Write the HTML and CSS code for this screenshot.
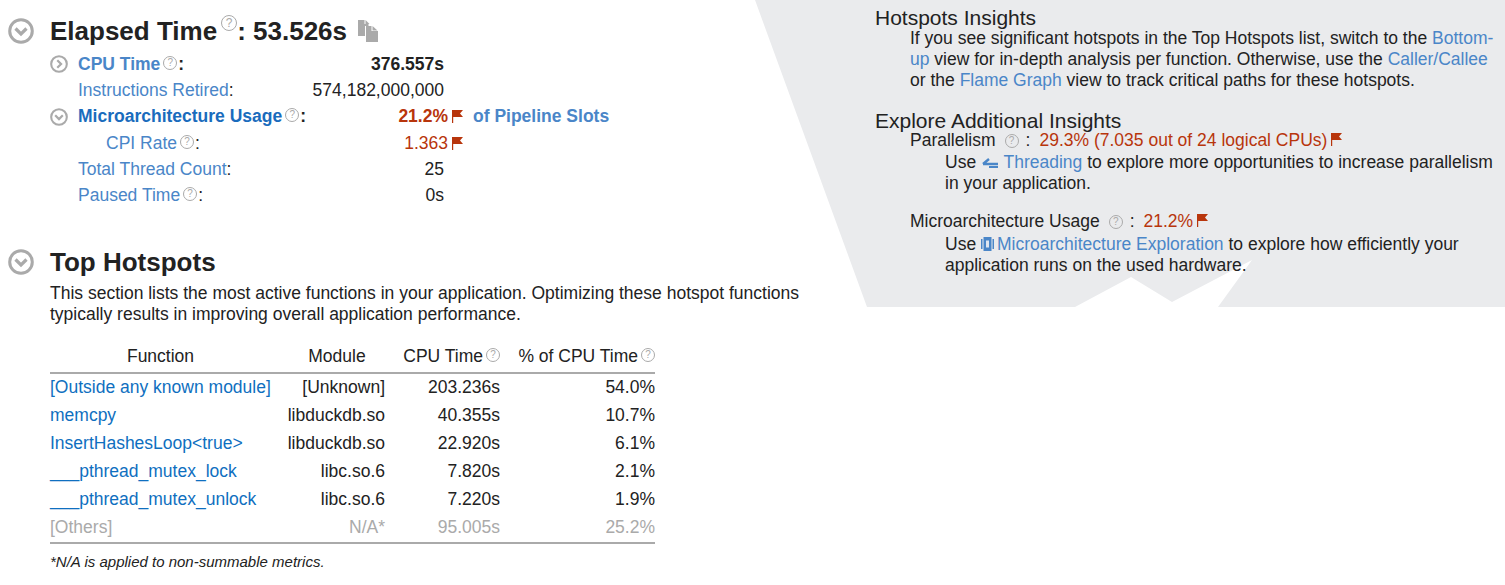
FILE: index.html
```html
<!DOCTYPE html>
<html lang="en">
<head>
  <meta charset="UTF-8" />
  <title>Summary</title>
  <link rel="stylesheet" href="styles.css">
</head>
<body>
  <svg class="defs" width="0" height="0">
    <symbol id="chev-down" viewBox="0 0 26 26"><circle cx="13" cy="13" r="11.300" fill="none" stroke="#aaa" stroke-width="3"/><path d="M7.500 10.500l5.500 5.500 5.500-5.500" fill="none" stroke="#aaa" stroke-width="3.200"/></symbol>
    <symbol id="chev-right" viewBox="0 0 26 26"><circle cx="13" cy="13" r="11.300" fill="none" stroke="#aaa" stroke-width="3"/><path d="M10.500 7.500l5.500 5.500-5.500 5.500" fill="none" stroke="#aaa" stroke-width="3.200"/></symbol>
    <symbol id="flag" viewBox="0 0 11 13"><path d="M0 0h1.200v13h-1.200zM1.200 0h9.800l-3 3.500 3 3.500h-9.800z" fill="#b8350c"/></symbol>
  </svg>

  <main class="left">
    <section class="elapsed">
      <div class="head">
        <svg class="toggle"><use href="#chev-down"/></svg>
        <h1>Elapsed Time<span class="help help-big">?</span>: 53.526s</h1>
        <svg class="copy" viewBox="0 0 20 22"><path d="M0 0h6.500v4h4v2h-3.500v10h-7z" fill="#aaa"/><path d="M7.500 0l4 4h-4z" fill="#aaa"/><path d="M8 6h5.500v5h6.500v11h-12z" fill="#aaa"/><path d="M14.500 6l5 4.500h-5z" fill="#aaa"/></svg>
      </div>
      <div class="metrics">
        <div class="metric strong">
          <svg class="toggle-sm"><use href="#chev-right"/></svg>
          <span class="label">CPU Time<span class="help">?</span><span class="dark">:</span></span>
          <span class="value">376.557s</span>
        </div>
        <div class="metric">
          <span class="label">Instructions Retired<span class="dark">:</span></span>
          <span class="value">574,182,000,000</span>
        </div>
        <div class="metric strong">
          <svg class="toggle-sm"><use href="#chev-down"/></svg>
          <span class="label deep">Microarchitecture Usage<span class="help">?</span><span class="dark">:</span></span>
          <span class="value bad">21.2%</span>
          <svg class="flag"><use href="#flag"/></svg>
          <span class="unit">of Pipeline Slots</span>
        </div>
        <div class="metric sub">
          <span class="label">CPI Rate<span class="help">?</span><span class="dark">:</span></span>
          <span class="value bad">1.363</span>
          <svg class="flag"><use href="#flag"/></svg>
        </div>
        <div class="metric">
          <span class="label">Total Thread Count<span class="dark">:</span></span>
          <span class="value">25</span>
        </div>
        <div class="metric">
          <span class="label">Paused Time<span class="help">?</span><span class="dark">:</span></span>
          <span class="value">0s</span>
        </div>
      </div>
    </section>

    <section class="hotspots">
      <div class="head">
        <svg class="toggle"><use href="#chev-down"/></svg>
        <h1>Top Hotspots</h1>
      </div>
      <p class="intro">This section lists the most active functions in your application. Optimizing these hotspot functions typically results in improving overall application performance.</p>
      <table class="grid">
        <thead>
          <tr>
            <th class="fn">Function</th>
            <th class="mod">Module</th>
            <th class="cpu">CPU Time<span class="help">?</span></th>
            <th class="pct">% of CPU Time<span class="help">?</span></th>
          </tr>
        </thead>
        <tbody>
          <tr><td><a>[Outside any known module]</a></td><td>[Unknown]</td><td>203.236s</td><td>54.0%</td></tr>
          <tr><td><a>memcpy</a></td><td>libduckdb.so</td><td>40.355s</td><td>10.7%</td></tr>
          <tr><td><a>InsertHashesLoop&lt;true&gt;</a></td><td>libduckdb.so</td><td>22.920s</td><td>6.1%</td></tr>
          <tr><td><a>___pthread_mutex_lock</a></td><td>libc.so.6</td><td>7.820s</td><td>2.1%</td></tr>
          <tr><td><a>___pthread_mutex_unlock</a></td><td>libc.so.6</td><td>7.220s</td><td>1.9%</td></tr>
          <tr class="others"><td>[Others]</td><td>N/A*</td><td>95.005s</td><td>25.2%</td></tr>
        </tbody>
      </table>
      <p class="note">*N/A is applied to non-summable metrics.</p>
    </section>
  </main>

  <aside class="insights">
    <h2>Hotspots Insights</h2>
    <p class="block">If you see significant hotspots in the Top Hotspots list, switch to the <a>Bottom-up</a> view for in-depth analysis per function. Otherwise, use the <a>Caller/Callee</a> or the <a>Flame Graph</a> view to track critical paths for these hotspots.</p>

    <h2 class="second">Explore Additional Insights</h2>
    <div class="block extra">
      <div class="line">Parallelism<span class="help help-wide">?</span>:<span class="bad">29.3% (7.035 out of 24 logical CPUs)</span><svg class="flag"><use href="#flag"/></svg></div>
      <p class="block use">Use <svg class="ico-thread" viewBox="0 0 16 10"><path d="M1 6l6-5M1 6h15M7 9.200h9" fill="none" stroke="#4a86c8" stroke-width="2.400"/></svg> <a>Threading</a> to explore more opportunities to increase parallelism in your application.</p>
      <div class="line gap">Microarchitecture Usage<span class="help help-wide">?</span>:<span class="bad">21.2%</span><svg class="flag"><use href="#flag"/></svg></div>
      <p class="block use2">Use <svg class="ico-chip" viewBox="0 0 13 14"><path d="M0 2h1.500v10h-1.500zM2.500 0h8v14h-8zM11.500 2h1.500v10h-1.500z" fill="#4a86c8"/><path d="M5 3.500h3v7h-3z" fill="#dfe6f0"/></svg><a>Microarchitecture Exploration</a> to explore how efficiently your application runs on the used hardware.</p>
    </div>
  </aside>
</body>
</html>
```

FILE: styles.css
```css
* {
  box-sizing: border-box;
}

html, body {
  margin: 0;
  padding: 0;
  background: #fff;
  overflow: hidden;
}

body {
  display: flex;
  align-items: flex-start;
  height: 585px;
  font-family: "Liberation Sans", Arial, sans-serif;
  font-size: 17.5px;
  color: #222;
}

.defs {
  position: absolute;
}

a {
  color: #4a86c8;
}

h1, h2, p {
  margin: 0;
  font-weight: normal;
}

.left {
  width: 755px;
  flex: none;
  padding: 15px 0 0 8px;
}

.head {
  display: flex;
  align-items: center;
  height: 32px;
}

.head h1 {
  font-size: 26px;
  font-weight: bold;
  color: #222;
  white-space: nowrap;
}

.toggle {
  width: 26px;
  height: 26px;
  margin-right: 16px;
}

.copy {
  width: 20px;
  height: 22px;
  margin-left: 11px;
}

.help {
  display: inline-block;
  width: 14px;
  height: 14px;
  margin: 0 1px 0 3px;
  border: 1px solid #aaa;
  border-radius: 50%;
  font-size: 10px;
  font-weight: normal;
  line-height: 12px;
  text-align: center;
  color: #aaa;
  vertical-align: 4px;
}

.help-big {
  position: relative;
  top: -4px;
  left: 1px;
  width: 16px;
  height: 16px;
  margin: 0 1px 0 3px;
  font-size: 12px;
  line-height: 14px;
  vertical-align: 9px;
}

.help-wide {
  margin: 0 7px 0 9px;
  vertical-align: 2px;
}

.metrics {
  margin-top: 4.4px;
}

.metric {
  display: grid;
  grid-template-columns: 366px auto auto auto;
  justify-content: start;
  align-items: center;
  height: 26.2px;
  margin-left: 70px;
  position: relative;
  color: #222;
}

.toggle-sm {
  position: absolute;
  left: -28px;
  top: 4px;
  width: 18px;
  height: 18px;
}

.label {
  grid-area: 1 / 1;
  color: #4a86c8;
  white-space: nowrap;
}

.metric.sub .label {
  padding-left: 28px;
}

.deep {
  color: #1a6cbd;
}

.dark {
  color: #222;
}

.value {
  grid-area: 1 / 1;
  justify-self: end;
  white-space: nowrap;
}

.value.bad {
  margin-right: -4px;
}

.strong {
  font-weight: bold;
}

.bad {
  color: #b8350c;
}

.flag {
  width: 11px;
  height: 13px;
  margin-left: 8px;
}

.line .bad {
  margin-left: 9px;
}

.line .flag {
  margin-left: 4px;
}

.unit {
  margin-left: 10px;
  color: #4a86c8;
}

.hotspots {
  margin-top: 37.6px;
}

.hotspots .intro {
  width: 760px;
  margin: 5px 0 0 42px;
  line-height: 20.5px;
}

.grid {
  margin: 17px 0 0 42px;
  border-collapse: collapse;
  table-layout: fixed;
  width: 605px;
  border-bottom: 2px solid #aaa;
}

.grid th {
  height: 32px;
  padding: 0;
  font-weight: normal;
  text-align: right;
  white-space: nowrap;
  border-bottom: 2px solid #aaa;
}

.grid th .help {
  margin-right: 0;
}

.grid th.fn {
  width: 221px;
  text-align: center;
}

.grid th.mod {
  width: 114px;
  padding-left: 18px;
  text-align: center;
}

.grid th.cpu {
  width: 115px;
}

.grid td {
  height: 28px;
  padding: 0;
  text-align: right;
  white-space: nowrap;
}

.grid td:first-child {
  text-align: left;
}

.grid td a {
  color: #0f6fc0;
}

.grid .others td {
  height: 30px;
  color: #aaa;
}

.note {
  margin: 9px 0 0 42px;
  font-size: 15px;
  font-style: italic;
}

.insights {
  position: relative;
  isolation: isolate;
  width: 750px;
  height: 307px;
  flex: none;
  padding: 7px 10px 0 120px;
  line-height: 21px;
}

/* only the grey shape is cut, the text may run past the notch */
.insights::before {
  content: "";
  position: absolute;
  inset: 0;
  z-index: -1;
  background: #eaebed;
  clip-path: polygon(0 0, 100% 0, 100% 100%, 463px 100%, 497px 260px, 417px 302px, 376px 277px, 320px 100%, 112px 100%);
}

.insights h2 {
  font-size: 21px;
  line-height: 21px;
  color: #222;
}

.insights h2.second {
  margin-top: 19px;
}

.insights .block {
  padding-left: 35px;
}

.extra {
  margin-top: -1px;
}

.line.gap {
  margin-top: 17px;
}

.use {
  margin-top: 1px;
}

.use2 {
  margin-top: 2px;
}

.ico-thread {
  width: 16px;
  height: 10px;
  margin: 0 1px;
}

.ico-chip {
  width: 13px;
  height: 14px;
  margin-right: 3px;
  vertical-align: -1px;
}
```
